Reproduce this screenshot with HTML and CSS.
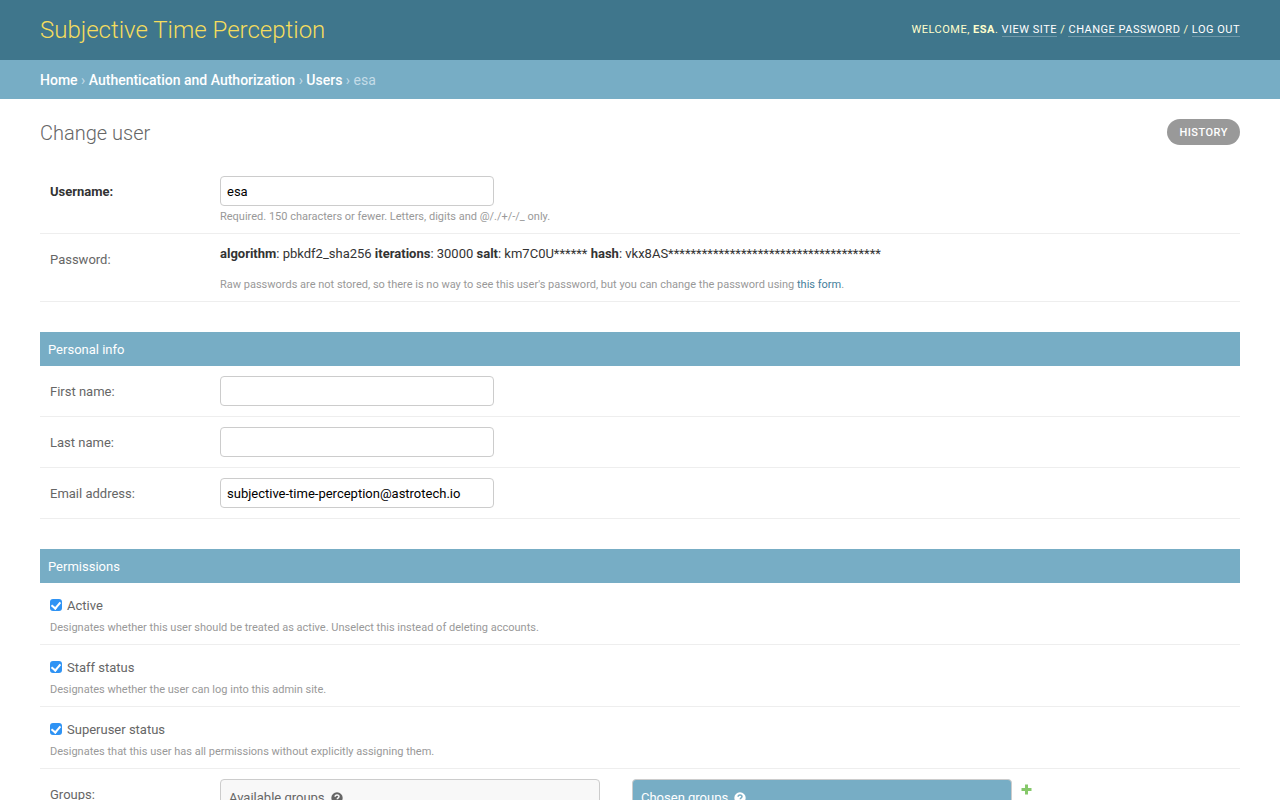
FILE: index.html
```html
<!DOCTYPE html>
<html lang="en">
<head>
<meta charset="utf-8">
<meta name="viewport" content="width=device-width, initial-scale=1">
<title>Change user</title>
<link rel="stylesheet" href="styles.css">
</head>
<body>
<header class="header">
  <h1 class="site-name">Subjective Time Perception</h1>
  <div class="user-tools">Welcome, <strong>esa</strong>. <a href="#">View site</a> / <a href="#">Change password</a> / <a href="#">Log out</a></div>
</header>
<nav class="breadcrumbs" aria-label="Breadcrumbs"><a href="#">Home</a> › <a href="#">Authentication and Authorization</a> › <a href="#">Users</a> › esa</nav>
<main class="content">
  <div class="title-bar">
    <h2 class="page-title">Change user</h2>
    <a class="history" href="#">History</a>
  </div>
  <form>
    <section class="module">
      <div class="row">
        <label class="label required" for="username">Username:</label>
        <div class="field">
          <input class="text" id="username" type="text" value="esa">
          <p class="help">Required. 150 characters or fewer. Letters, digits and @/./+/-/_ only.</p>
        </div>
      </div>
      <div class="row">
        <span class="label">Password:</span>
        <div class="field">
          <p class="hash"><strong>algorithm</strong>: pbkdf2_sha256 <strong>iterations</strong>: 30000 <strong>salt</strong>: km7C0U****** <strong>hash</strong>: vkx8AS**************************************</p>
          <p class="help">Raw passwords are not stored, so there is no way to see this user's password, but you can change the password using <a href="#">this form</a>.</p>
        </div>
      </div>
    </section>
    <section class="module">
      <h3 class="module-title">Personal info</h3>
      <div class="row">
        <label class="label" for="first">First name:</label>
        <div class="field"><input class="text" id="first" type="text"></div>
      </div>
      <div class="row">
        <label class="label" for="last">Last name:</label>
        <div class="field"><input class="text" id="last" type="text"></div>
      </div>
      <div class="row">
        <label class="label" for="email">Email address:</label>
        <div class="field"><input class="text" id="email" type="email" value="subjective-time-perception@astrotech.io"></div>
      </div>
    </section>
    <section class="module">
      <h3 class="module-title">Permissions</h3>
      <div class="row check-row">
        <div class="check"><input class="box" id="active" type="checkbox" checked><label for="active">Active</label></div>
        <p class="help">Designates whether this user should be treated as active. Unselect this instead of deleting accounts.</p>
      </div>
      <div class="row check-row">
        <div class="check"><input class="box" id="staff" type="checkbox" checked><label for="staff">Staff status</label></div>
        <p class="help">Designates whether the user can log into this admin site.</p>
      </div>
      <div class="row check-row">
        <div class="check"><input class="box" id="super" type="checkbox" checked><label for="super">Superuser status</label></div>
        <p class="help">Designates that this user has all permissions without explicitly assigning them.</p>
      </div>
      <div class="row">
        <span class="label">Groups:</span>
        <div class="selector">
          <h4 class="list-title">Available groups
            <svg class="hint" viewBox="0 0 12 12" aria-hidden="true"><circle cx="6" cy="6" r="5.7" fill="#666"/><path d="M4.1 4.8C4.1 2.5 8 2.4 8 4.6C8 5.8 6.2 5.8 6.2 7.2M6.2 8.2V9.6" fill="none" stroke="#f8f8f8" stroke-width="1.5"/></svg>
          </h4>
          <h4 class="list-title chosen">Chosen groups
            <svg class="hint" viewBox="0 0 12 12" aria-hidden="true"><circle cx="6" cy="6" r="5.7" fill="#fff"/><path d="M4.1 4.8C4.1 2.5 8 2.4 8 4.6C8 5.8 6.2 5.8 6.2 7.2M6.2 8.2V9.6" fill="none" stroke="#77adc5" stroke-width="1.5"/></svg>
          </h4>
          <a class="add" href="#" aria-label="Add group"><svg viewBox="0 0 11 11" aria-hidden="true"><path d="M4 .5H7V4H10.500V7H7V10.500H4V7H.5V4H4Z" fill="#86c86a"/></svg></a>
        </div>
      </div>
    </section>
  </form>
</main>
</body>
</html>
```
FILE: styles.css
```css
* {
  box-sizing: border-box;
}

body {
  margin: 0;
  background: #fff;
  color: #333;
  font-family: Roboto, "Liberation Sans", sans-serif;
  font-size: 13px;
  line-height: 20px;
}

h1, h2, h3, h4, p {
  margin: 0;
  font-weight: 400;
}

a {
  color: #447e9b;
  text-decoration: none;
}

.header {
  display: flex;
  align-items: center;
  justify-content: space-between;
  min-height: 60px;
  padding: 0 40px;
  background: #3f768c;
  color: #ffc;
}

.site-name {
  color: #f5dd5d;
  font-size: 24px;
  font-weight: 300;
  line-height: 30px;
}

.user-tools {
  font-size: 11px;
  line-height: 16px;
  letter-spacing: 0.5px;
  text-transform: uppercase;
}

.user-tools a {
  border-bottom: 1px solid rgba(255, 255, 255, 0.25);
  color: #fff;
}

.breadcrumbs {
  padding: 11px 40px 9px;
  background: #77adc5;
  color: #c4dce8;
  font-size: 14px;
  line-height: 19px;
}

.breadcrumbs a {
  color: #fff;
  font-weight: 500;
}

.content {
  padding: 20px 40px 0;
}

.title-bar {
  display: flex;
  align-items: flex-start;
  justify-content: space-between;
  margin-bottom: 19px;
}

.page-title {
  color: #666;
  font-size: 20px;
  font-weight: 300;
  line-height: 28px;
}

.history {
  padding: 7px 12px 5px;
  border-radius: 15px;
  background: #999;
  color: #fff;
  font-size: 11px;
  font-weight: 500;
  line-height: 14px;
  letter-spacing: 0.5px;
  text-transform: uppercase;
}

.module {
  margin-bottom: 30px;
}

.module-title {
  padding: 9px 8px 7px;
  background: #77adc5;
  color: #fff;
  font-size: 13px;
  line-height: 18px;
}

.row {
  display: flex;
  padding: 10px;
  border-bottom: 1px solid #eee;
}

.module:last-child {
  margin: 0;
}

.module:last-child .row:last-child {
  padding-bottom: 0;
  border: 0;
}

.label {
  flex: 0 0 170px;
  padding-top: 9px;
  color: #666;
  line-height: 14px;
}

.required {
  color: #333;
  font-weight: 700;
}

.field {
  flex: 1;
  min-width: 0;
}

.text {
  display: block;
  width: 274px;
  max-width: 100%;
  height: 30px;
  padding: 5px 6px;
  border: 1px solid #ccc;
  border-radius: 4px;
  background: #fff;
  color: #000;
  font: inherit;
}

.help {
  padding-top: 4px;
  color: #999;
  font-size: 11px;
  line-height: 13px;
}

.hash {
  padding-bottom: 10px;
}

.check-row {
  flex-direction: column;
}

.check {
  display: flex;
  align-items: center;
  gap: 5px;
  min-height: 24px;
  color: #666;
}

.check label {
  padding-top: 1px;
}

.box {
  display: grid;
  place-items: center;
  appearance: none;
  width: 12px;
  height: 12px;
  margin: 0;
  border-radius: 3px;
  background: #2f93f4;
}

.box:checked::before {
  content: "";
  width: 4px;
  height: 7px;
  margin-bottom: 1px;
  border: solid #fff;
  border-width: 0 2px 2px 0;
  transform: rotate(40deg);
}

.selector {
  display: flex;
  align-items: flex-start;
  flex: 1;
}

.list-title {
  display: flex;
  align-items: center;
  gap: 6px;
  flex: 0 1 380px;
  padding: 9px 8px 7px;
  border: 1px solid #ccc;
  border-radius: 4px 4px 0 0;
  background: #f8f8f8;
  color: #666;
  line-height: 18px;
}

.chosen {
  margin-left: 32px;
  background: #77adc5;
  color: #fff;
}

.hint {
  width: 12px;
  height: 12px;
}

.add {
  margin: 5px 0 0 9px;
}

.add svg {
  display: block;
  width: 11px;
  height: 11px;
}
```
